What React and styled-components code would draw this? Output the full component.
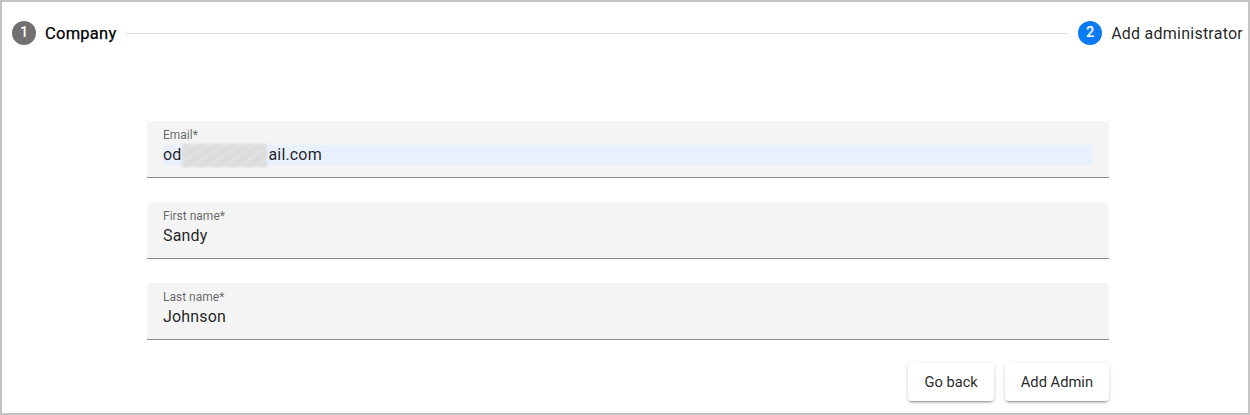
import React from "react";
import styled, { createGlobalStyle } from "styled-components";

const Global = createGlobalStyle`
  html, body { margin: 0; padding: 0; background: #fff; }
  body { font-family: Roboto, "Liberation Sans", Arial, sans-serif; }
  * { box-sizing: border-box; }
`;

const Frame = styled.div`
  width: 1250px;
  height: 415px;
  border: 2px solid #c4c4c4;
  background: #fff;
  display: flex;
  flex-direction: column;
`;

const Stepper = styled.div`
  display: flex;
  align-items: center;
  padding: 19px 5px 0 10px;
  height: 43px;
`;

const Step = styled.div`
  display: flex;
  align-items: center;
  gap: 9px;
`;

const StepIcon = styled.div`
  width: 24px;
  height: 24px;
  border-radius: 50%;
  background: ${(p) => (p.$active ? "#0b7bf5" : "#707070")};
  color: #fff;
  font-size: 14.5px;
  font-weight: 500;
  display: flex;
  align-items: center;
  justify-content: center;
  line-height: 1;
`;

const StepLabel = styled.span`
  font-size: ${(p) => (p.$strong ? "16.5px" : "16px")};
  font-weight: 400;
  color: ${(p) => (p.$strong ? "#000" : "rgba(0, 0, 0, 0.87)")};
  letter-spacing: 0.015em;
  -webkit-text-stroke: ${(p) => (p.$strong ? "0.25px #000" : "0")};
`;

const Connector = styled.div`
  flex: 1;
  height: 1px;
  background: #dedede;
  margin: 0 10px 0 9px;
`;

const Form = styled.div`
  width: 962px;
  margin: 76px 0 0 145px;
  display: flex;
  flex-direction: column;
  gap: 24px;
`;

const Field = styled.div`
  background: #f4f4f4;
  border-radius: 4px 4px 0 0;
  border-bottom: 1px solid #8c8c8c;
  padding: 7px 17px 12px 16px;
  display: flex;
  flex-direction: column;
`;

const Label = styled.label`
  font-size: 12px;
  line-height: 14px;
  color: rgba(0, 0, 0, 0.6);
  height: 14px;
`;

const Value = styled.div`
  margin-top: 3px;
  height: 20px;
  line-height: 20px;
  font-size: 16px;
  color: rgba(0, 0, 0, 0.87);
  background: ${(p) => (p.$autofill ? "#e8f0fe" : "transparent")};
  display: flex;
  align-items: center;
  letter-spacing: 0.01em;
`;

const Redacted = styled.span`
  display: inline-block;
  width: 85px;
  height: 23px;
  margin: -1px 1px 0 1px;
  align-self: flex-start;
  background: repeating-linear-gradient(
    -35deg,
    #dcdcdc 0px,
    #dcdcdc 6px,
    #e6e6e6 7px,
    #dcdcdc 9px
  );
  filter: blur(0.8px);
`;

const Actions = styled.div`
  display: flex;
  justify-content: flex-end;
  gap: 11px;
  margin-top: -1px;
`;

const Button = styled.button`
  height: 38px;
  padding: 0 16px;
  border: none;
  border-radius: 4px;
  background: #fff;
  font-family: Roboto, "Liberation Sans", Arial, sans-serif;
  font-size: 14.7px;
  color: rgba(0, 0, 0, 0.87);
  box-shadow: 0 3px 1px -2px rgba(0, 0, 0, 0.2), 0 2px 2px 0 rgba(0, 0, 0, 0.14),
    0 1px 5px 0 rgba(0, 0, 0, 0.12);
  cursor: pointer;
`;

export default function App() {
  return (
    <>
      <Global />
      <Frame>
        <Stepper>
          <Step>
            <StepIcon>1</StepIcon>
            <StepLabel $strong>Company</StepLabel>
          </Step>
          <Connector />
          <Step>
            <StepIcon $active>2</StepIcon>
            <StepLabel>Add administrator</StepLabel>
          </Step>
        </Stepper>
        <Form>
          <Field>
            <Label>Email*</Label>
            <Value $autofill>
              od
              <Redacted />
              ail.com
            </Value>
          </Field>
          <Field>
            <Label>First name*</Label>
            <Value>Sandy</Value>
          </Field>
          <Field>
            <Label>Last name*</Label>
            <Value>Johnson</Value>
          </Field>
          <Actions>
            <Button>Go back</Button>
            <Button>Add Admin</Button>
          </Actions>
        </Form>
      </Frame>
    </>
  );
}
